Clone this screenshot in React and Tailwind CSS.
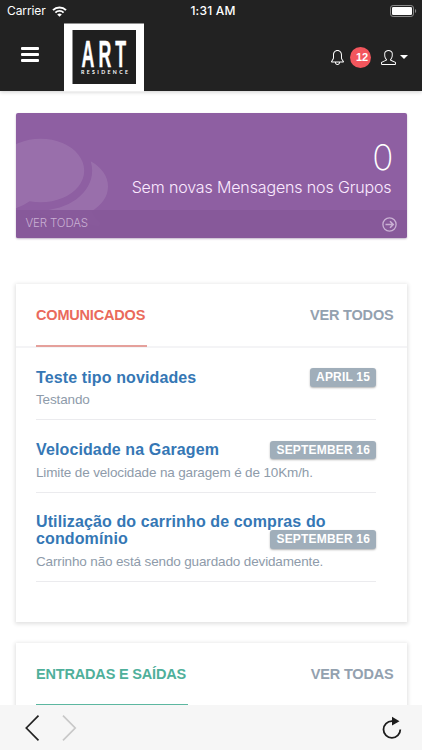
import { SlBell, SlUser } from 'react-icons/sl'

const notices = [
  { title: 'Teste tipo novidades', text: 'Testando', date: 'APRIL 15' },
  { title: 'Velocidade na Garagem', text: 'Limite de velocidade na garagem é de 10Km/h.', date: 'SEPTEMBER 16' },
  { title: 'Utilização do carrinho de compras do condomínio', text: 'Carrinho não está sendo guardado devidamente.', date: 'SEPTEMBER 16' }
]

const StatusBar = () => (
  <div className="relative flex h-[22px] items-center justify-between pl-[7px] pr-[5px] font-['Inter',sans-serif] text-[12px] text-white">
    <div className="flex items-center gap-[6px]">
      <span className="tracking-[-0.1px]">Carrier</span>
      <svg width="15" height="11" viewBox="0 0 15 11" fill="none" stroke="white">
        <path d="M1 4.1a9.2 9.2 0 0 1 13 0" strokeWidth="2" />
        <path d="M3.4 6.6a5.8 5.8 0 0 1 8.2 0" strokeWidth="1.9" />
        <path d="M7.5 10.8 5.2 8.5a3.3 3.3 0 0 1 4.6 0z" fill="white" stroke="none" />
      </svg>
    </div>
    <span className="absolute left-0 w-full text-center pl-[4px] text-[12px] font-medium tracking-[0.2px]">1:31 AM</span>
    <svg width="27" height="12" viewBox="0 0 27 12">
      <rect x="0.5" y="0.5" width="23" height="11" rx="2.6" fill="none" stroke="#8b8b8b" />
      <rect x="2" y="2" width="20" height="8" rx="1.3" fill="white" />
      <path d="M25 4v4c1.6-.6 1.6-3.4 0-4z" fill="#8b8b8b" />
    </svg>
  </div>
)

const Logo = () => (
  <svg width="80" height="69" viewBox="0 0 80 69" className="ml-[25px]">
    <rect y="0.5" width="80" height="68" fill="white" />
    <rect x="8.5" y="7" width="63.5" height="54" fill="#1f1f1f" />
    <g transform="translate(0 44.2) scale(0.48 1)" fill="white" stroke="white" strokeWidth="0.4" fontFamily="Liberation Sans" fontWeight="700" fontSize="37">
      <text x="36.5 72 107">ART</text>
    </g>
    <text x="17" y="51.3" fill="white" fontFamily="Lato" fontWeight="700" fontSize="5.2" textLength="47">RESIDENCE</text>
  </svg>
)

const Header = () => (
  <header className="h-[91px] shrink-0 bg-[#222222] shadow-[0_1px_4px_rgba(0,0,0,0.2)]">
    <StatusBar />
    <div className="flex h-[69px] items-start pl-[21px] pr-[14px] pt-[1px]">
      <div className="mt-[24px] flex w-[18px] flex-col gap-[3px]">
        <span className="h-[3px] rounded-[1px] bg-white" />
        <span className="h-[3px] rounded-[1px] bg-white" />
        <span className="h-[3px] rounded-[1px] bg-white" />
      </div>
      <Logo />
      <div className="ml-auto mt-[23px] flex h-[22px] items-center text-white">
        <SlBell size={15} />
        <span className="ml-[5px] flex size-[21px] items-center justify-center rounded-full bg-[#f3565d] pl-[3px] text-[11px] font-bold">12</span>
        <SlUser size={15} className="ml-[10px]" />
        <span className="ml-[4px] border-x-[4px] border-t-[4px] border-x-transparent border-t-white" />
      </div>
    </div>
  </header>
)

const MessagesCard = () => (
  <div className="relative flex h-[125px] flex-col overflow-hidden rounded-[2px] bg-[#8e5fa2] shadow-[0_1px_2px_rgba(80,40,100,0.35)]">
    <svg className="absolute left-[-19px] top-[10px]" width="111" height="111" viewBox="0 0 1792 1792" fill="white" fillOpacity="0.1">
      <path d="M1408 768q0 139-94 257t-256.5 186.5-353.5 68.5q-86 0-176-16-124 88-278 128-36 9-86 16h-3q-11 0-20.5-8t-11.5-21q-1-3-1-6.5t.5-6.5 2-6l2.5-5 3.5-5.5 4-5 4.5-5 4-4.5q5-6 23-25t26-29.5 22.5-29 25-38.5 20.5-44q-124-72-195-177t-71-224q0-139 94-257t256.5-186.5 353.5-68.5 353.5 68.5 256.5 186.5 94 257zm384 256q0 120-71 224.5t-195 176.5q10 24 20.5 44t25 38.5 22.5 29 26 29.5 23 25q1 1 4 4.5t4.5 5 4 5 3.5 5.5l2.5 5 2 6 .5 6.5-1 6.5q-3 14-13 22t-22 7q-50-7-86-16-154-40-278-128-90 16-176 16-271 0-472-132 58 4 88 4 161 0 309-45t264-129q125-92 192-212t67-254q0-77-23-152 129 71 204 178t75 230z" />
    </svg>
    <div className="relative flex-1 pr-[15px] pt-[26px] text-right font-['Inter',sans-serif] font-light text-white">
      <div className="mr-[-2px] text-[35px] font-extralight leading-[36px]">0</div>
      <div className="mt-[1px] text-[16px] leading-[22px] tracking-[-0.14px] text-[#fbeaff]">Sem novas Mensagens nos Grupos</div>
    </div>
    <div className="relative flex h-[28px] items-center justify-between bg-[#87599a]/95 pl-[10px] pr-[10px] text-[#c9b0d3]">
      <span className="font-['Inter',sans-serif] text-[11.5px] font-light tracking-[-0.15px]">VER TODAS</span>
      <svg width="15" height="15" viewBox="0 0 15 15" fill="none" stroke="currentColor" strokeWidth="1.3">
        <circle cx="7.5" cy="7.5" r="6.6" />
        <path d="M3.5 7.5h7.5M8 4.3l3.2 3.2L8 10.7" strokeWidth="1.6" />
      </svg>
    </div>
  </div>
)

const PanelHead = ({ title, link, color, line }) => (
  <div className="flex h-[64px] justify-between border-b-2 border-[#f4f4f6] pl-[20.5px] pr-[13px] text-[14.5px] font-bold">
    <div className={`flex h-[63px] items-center border-b-2 pr-[2px] pt-[2px] tracking-[-0.18px] ${color} ${line}`}>{title}</div>
    <div className="flex h-[63px] items-center tracking-[-0.18px] text-[#93a1af]">{link}</div>
  </div>
)

const Notice = ({ title, text, date }) => (
  <li className="relative border-b border-[#ebebee] pb-[8px] pt-[20.5px]">
    <h4 className="text-[16px] font-bold leading-[17.25px] tracking-[0.12px] text-[#3577b5]">{title}</h4>
    <span className="absolute bottom-[32.5px] right-0 h-[18.5px] rounded-[3px] bg-[#a0aeba] px-[6px] text-[12px] font-bold leading-[18px] tracking-[0.18px] text-white shadow-[0_1px_2px_rgba(0,0,0,0.3)]">{date}</span>
    <p className="mt-[2.5px] text-[13.5px] leading-[23px] tracking-[-0.14px] text-[#8e9baa]">{text}</p>
  </li>
)

const App = () => {
  return (
    <div className="flex h-[750px] w-[422px] flex-col overflow-hidden bg-white font-['Liberation_Sans',Arial,sans-serif]">
      <Header />

      <main className="flex-1 overflow-hidden px-[15.5px] pt-[22px]">
        <MessagesCard />

        {/* Notices */}
        <section className="mt-[46px] h-[338px] bg-white shadow-[0_1px_4px_1px_rgba(0,0,0,0.12)]">
          <PanelHead title="COMUNICADOS" link="VER TODOS" color="text-[#ea6a5c]" line="border-[#e5a09b]" />
          <ul className="pl-[20.5px] pr-[30.5px]">
            {notices.map((n) => (
              <Notice key={n.title} {...n} />
            ))}
          </ul>
        </section>

        {/* Check-ins */}
        <section className="mt-[21px] h-[120px] bg-white shadow-[0_1px_4px_1px_rgba(0,0,0,0.12)]">
          <PanelHead title="ENTRADAS E SAÍDAS" link="VER TODAS" color="text-[#4fb09b]" line="border-[#5cb7a0]" />
        </section>
      </main>

      {/* Browser toolbar */}
      <footer className="flex h-[45px] shrink-0 items-center bg-[#f6f6f6] pl-[25px] pr-[20px]">
        <svg width="15" height="26" viewBox="0 0 15 26" fill="none" stroke="#222" strokeWidth="1.7">
          <path d="M13.5 .7 1.3 13l12.2 12.3" />
        </svg>
        <svg className="ml-[22px]" width="15" height="26" viewBox="0 0 15 26" fill="none" stroke="#c8c8c8" strokeWidth="1.7">
          <path d="M1 .7 13.2 13 1 25.3" />
        </svg>
        <svg className="ml-auto" width="20" height="24" viewBox="0 0 20 24" fill="none" stroke="#1c1c1c" strokeWidth="1.8">
          <path d="M18.3 13.5a8.4 8.4 0 1 1-8.4-8.4h2" />
          <path d="M10 .8v8.8l7.5-4.4z" fill="#1c1c1c" stroke="none" />
        </svg>
      </footer>
    </div>
  )
}

export default App
